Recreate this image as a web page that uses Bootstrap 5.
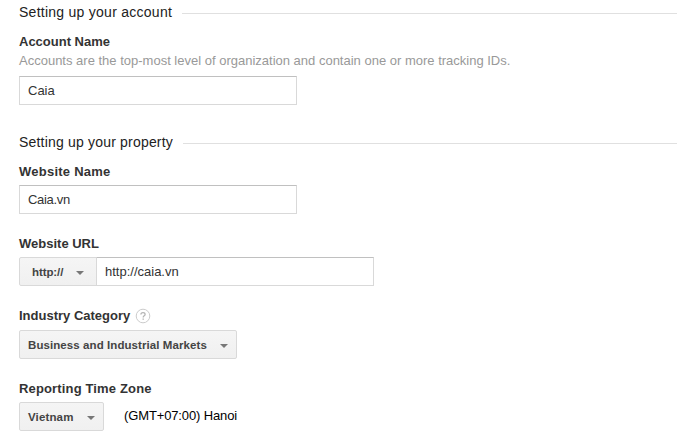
<!DOCTYPE html>
<html lang="en">
<head>
<meta charset="utf-8">
<meta name="viewport" content="width=device-width, initial-scale=1">
<title>Account setup</title>
<link href="https://cdn.jsdelivr.net/npm/bootstrap@5.3.0/dist/css/bootstrap.min.css" rel="stylesheet">
<style>
  body { font-family: "Liberation Sans", Arial, sans-serif; font-size: 13px; line-height: 18px; color: #222; background: #fff; overflow: hidden; }
  .setup { padding: 2px 0 0 19px; }
  .section-title { font-size: 14px; line-height: 20px; letter-spacing: .26px; font-weight: 400; gap: 10px; color: #222; }
  .section-title.property { letter-spacing: .19px; }
  .section-rule { height: 1px; background: #e0e0e0; margin-top: 3px; }
  .setup .form-label { font-weight: 700; color: #333; }
  .account-block { margin-top: 11px; height: 99px; }
  .site-block { margin-top: 11px; height: 72px; }
  .url-block { height: 72px; }
  .industry-block { height: 73px; }
  .site-block .form-label, .url-block .form-label, .zone-block .form-label { height: 22px; }
  .industry-block .form-label { height: 23px; }
  .help-line { color: #999; height: 25px; padding-top: 1px; }
  .setup .form-control { width: 278px; height: 29px; font-size: 13px; line-height: 18px; padding: 0 8px 1px; border: 1px solid #d9d9d9; border-top-color: #c0c0c0; color: #333; box-shadow: none; }
  .setup .input-group { width: 355px; }
  .menu-btn { height: 29px; padding: 0 8px; font-size: 11.5px; line-height: 16px; font-weight: 700; color: #444; border: 1px solid #d9d9d9; border-radius: 2px; background: linear-gradient(#f5f5f5, #f0f0f0); }
  .menu-btn.scheme { width: 78px; padding: 0 12px; letter-spacing: -.1px; border-radius: 2px 0 0 2px; }
  .menu-btn.category { width: 218px; letter-spacing: .08px; }
  .menu-btn.country { width: 85px; letter-spacing: .14px; }
  .menu-btn::after { content: ""; border: 4px solid transparent; border-top-color: #777; border-bottom: 0; margin-top: 2px; }
  .menu-btn:hover { background: #f0f0f0; border-color: #c6c6c6; }
  .ls-wide { letter-spacing: .24px; }
  .ls-mid { letter-spacing: .15px; }
  .ls-tight { letter-spacing: -.3px; }
  .zone-text { color: #000; letter-spacing: -.13px; margin-left: 20px; padding-bottom: 2px; }
  .help-icon { margin-left: 5px; margin-top: 1px; }
</style>
</head>
<body>
<main class="setup">
  <h2 class="section-title d-flex align-items-center mb-0">Setting up your account<span class="section-rule flex-grow-1"></span></h2>
  <div class="account-block">
    <label class="form-label d-block mb-0" for="account">Account Name</label>
    <div class="help-line">Accounts are the top-most level of organization and contain one or more tracking IDs.</div>
    <input class="form-control rounded-0" id="account" type="text" value="Caia">
  </div>
  <h2 class="section-title property d-flex align-items-center mb-0">Setting up your property<span class="section-rule flex-grow-1"></span></h2>
  <div class="site-block">
    <label class="form-label d-block mb-0 ls-wide" for="site">Website Name</label>
    <input class="form-control rounded-0 ls-tight" id="site" type="text" value="Caia.vn">
  </div>
  <div class="url-block">
    <label class="form-label d-block mb-0" for="url">Website URL</label>
    <div class="input-group flex-nowrap">
      <button class="btn menu-btn scheme d-flex align-items-center justify-content-between" type="button">http://</button>
      <input class="form-control rounded-0" id="url" type="text" value="http://caia.vn">
    </div>
  </div>
  <div class="industry-block">
    <div class="form-label d-flex align-items-start mb-0">Industry Category
      <svg class="help-icon" width="16" height="16" viewBox="0 0 16 16" fill="none" role="img" aria-label="Help">
        <circle cx="8" cy="8" r="6.8" stroke="#ccc"/>
        <path d="M5.9 6.6c0-1.3.9-2 2.1-2s2.1.7 2.1 1.8c0 1.4-1.9 1.5-1.9 3" stroke="#b5b5b5" stroke-width="1.3"/>
        <path d="M7.5 10.4h1.4v1.4H7.5z" fill="#b5b5b5"/>
      </svg>
    </div>
    <button class="btn menu-btn category d-flex align-items-center justify-content-between" type="button">Business and Industrial Markets</button>
  </div>
  <div class="zone-block">
    <div class="form-label mb-0 ls-mid">Reporting Time Zone</div>
    <div class="d-flex align-items-center">
      <button class="btn menu-btn country d-flex align-items-center justify-content-between" type="button">Vietnam</button>
      <span class="zone-text">(GMT+07:00) Hanoi</span>
    </div>
  </div>
</main>
<script src="https://cdn.jsdelivr.net/npm/bootstrap@5.3.0/dist/js/bootstrap.bundle.min.js"></script>
</body>
</html>
